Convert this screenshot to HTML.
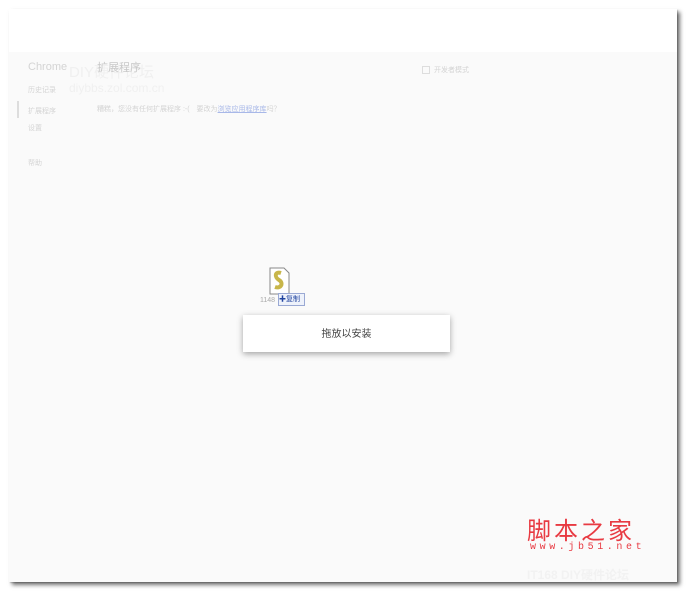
<!DOCTYPE html>
<html><head><meta charset="utf-8"><style>
body{margin:0;width:688px;height:594px;background:#fff;position:relative;overflow:hidden;font-family:"Liberation Sans","Noto Sans CJK SC",sans-serif}
.win{position:absolute;left:9px;top:9px;width:668px;height:573px;background:#fafafa;box-shadow:3px 3px 4px rgba(0,0,0,.55),1px 1px 1px rgba(0,0,0,.2)}
.top{position:absolute;left:0;top:0;width:100%;height:43px;background:#fff}
.t{position:absolute;color:#d4d4d4;white-space:nowrap}
.dlg{position:absolute;left:243px;top:315px;width:207px;height:37px;background:#fff;box-shadow:0 2px 6px rgba(0,0,0,.35);font-size:10px;color:#444;text-align:center;line-height:40px}
</style></head><body>
<div class="win"><div class="top"></div>
<div class="t" style="left:19px;top:52px;font-size:11px">Chrome</div>
<div class="t" style="left:60px;top:52px;font-size:15px;color:#f0f0f0">DIY硬件论坛</div>
<div class="t" style="left:60px;top:72px;font-size:12px;color:#f0f0f0">diybbs.zol.com.cn</div>
<div class="t" style="left:88px;top:50px;font-size:11px;color:#c8c8c8">扩展程序</div>
<div class="t" style="left:19px;top:76px;font-size:7px">历史记录</div>
<div style="position:absolute;left:8px;top:92px;width:2px;height:17px;background:#ddd"></div>
<div class="t" style="left:19px;top:97px;font-size:7px">扩展程序</div>
<div class="t" style="left:19px;top:114px;font-size:7px">设置</div>
<div class="t" style="left:19px;top:149px;font-size:7px">帮助</div>
<div class="t" style="left:88px;top:95px;font-size:7px">糟糕，您没有任何扩展程序 :-(　要改为<span style="color:#a8b8e8;text-decoration:underline">浏览应用程序库</span>吗？</div>
<div style="position:absolute;left:413px;top:57px;width:6px;height:6px;border:1px solid #ddd"></div>
<div class="t" style="left:425px;top:56px;font-size:7px">开发者模式</div>
<div class="t" style="left:518px;top:557px;font-size:12px;color:#f2f2f2;font-weight:bold">IT168 DIY硬件论坛</div>
</div>
<svg style="position:absolute;left:269px;top:267px" width="22" height="28" viewBox="0 0 22 28"><path d="M1 1H15L20 6V27H1Z" fill="#fff" stroke="#888"/><path d="M12 6C6 4 5 10 10 13C15 16 12 22 6 20" stroke="#c8b64a" stroke-width="4" fill="none"/></svg>
<div style="position:absolute;left:260px;top:297px;font-size:7px;color:#aaa">1148</div>
<div style="position:absolute;left:278px;top:293px;width:25px;height:11px;background:#eef2fb;border:1px solid #9aa9d4;font-size:7px;line-height:11px;color:#2245a0">✚复制</div>
<div class="dlg">拖放以安装</div>
<div style="position:absolute;left:527px;top:511px;font-family:'Noto Sans CJK SC',sans-serif;font-size:24px;color:#e83a42;letter-spacing:3px">脚本之家</div>
<div style="position:absolute;left:530px;top:542px;font-family:'Liberation Mono',monospace;font-size:10px;color:#e83a42;letter-spacing:3.6px">www.jb51.net</div>
</body></html>
